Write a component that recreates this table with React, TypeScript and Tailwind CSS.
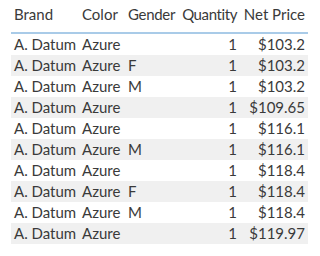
const rows = [
  { g: '', p: '$103.2' },
  { g: 'F', p: '$103.2' },
  { g: 'M', p: '$103.2' },
  { g: '', p: '$109.65' },
  { g: '', p: '$116.1' },
  { g: 'M', p: '$116.1' },
  { g: '', p: '$118.4' },
  { g: 'F', p: '$118.4' },
  { g: 'M', p: '$118.4' },
  { g: '', p: '$119.97' },
];

export default function App() {
  return (
    <div className="w-[320px] h-[256px] bg-white pl-[11px] text-[15px] text-[#3a3a3a] font-['Lato',sans-serif]">
      <div className="w-[297px]">
        <div className="flex h-[34px] pt-[4px] border-b-2 border-[#a9cbe8] leading-[20px]">
          <div className="w-[71px] pl-[3px]">Brand</div>
          <div className="w-[46px]">Color</div>
          <div className="w-[52px] tracking-[-0.3px]">Gender</div>
          <div className="w-[57px] text-right tracking-[-0.4px]">Quantity</div>
          <div className="flex-1 text-right pr-[3px]">Net Price</div>
        </div>
        {rows.map((r, i) => (
          <div key={i} className={`flex h-[21px] items-center ${i % 2 === 1 ? 'bg-[#f0f0f0]' : ''}`}>
            <div className="w-[71px] pl-[3px]">A. Datum</div>
            <div className="w-[46px]">Azure</div>
            <div className="w-[52px]">{r.g}</div>
            <div className="w-[57px] text-right">1</div>
            <div className="flex-1 text-right pr-[3px]">{r.p}</div>
          </div>
        ))}
      </div>
    </div>
  );
}
